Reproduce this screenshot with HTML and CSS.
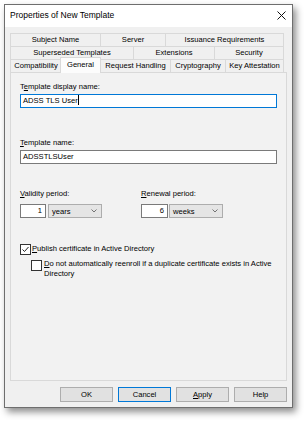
FILE: index.html
```html
<!DOCTYPE html>
<html>
<head>
<meta charset="utf-8">
<link rel="stylesheet" href="styles.css">
</head>
<body>
<div class="window">
  <div class="titlebar">
    <span class="title">Properties of New Template</span>
    <svg class="close" width="9" height="9" viewBox="0 0 9 9"><path d="M0.5 0.5 L8.5 8.5 M8.5 0.5 L0.5 8.5" stroke="#111" stroke-width="1" fill="none"/></svg>
  </div>
  <div class="content">
    <div class="tabs">
      <div class="tabrow r1">
        <div class="tab">Subject Name</div>
        <div class="tab">Server</div>
        <div class="tab">Issuance Requirements</div>
      </div>
      <div class="tabrow r2">
        <div class="tab">Superseded Templates</div>
        <div class="tab">Extensions</div>
        <div class="tab">Security</div>
      </div>
      <div class="tabrow r3">
        <div class="tab">Compatibility</div>
        <div class="tab selected">General</div>
        <div class="tab">Request Handling</div>
        <div class="tab">Cryptography</div>
        <div class="tab">Key Attestation</div>
      </div>
    </div>
    <div class="panel">
      <div class="label">T<u>e</u>mplate display name:</div>
      <div class="field focus">ADSS TLS User<span class="caret"></span></div>
      <div class="label l2"><u>T</u>emplate name:</div>
      <div class="field">ADSSTLSUser</div>
      <div class="periods">
        <div class="period">
          <div class="label"><u>V</u>alidity period:</div>
          <div class="ctrls">
            <div class="num">1</div>
            <div class="select"><span>years</span><svg width="6" height="4" viewBox="0 0 6 4"><path d="M0.5 0.5 L3 3 L5.5 0.5" stroke="#555" stroke-width="0.8" fill="none"/></svg></div>
          </div>
        </div>
        <div class="period">
          <div class="label"><u>R</u>enewal period:</div>
          <div class="ctrls">
            <div class="num num2">6</div>
            <div class="select"><span>weeks</span><svg width="6" height="4" viewBox="0 0 6 4"><path d="M0.5 0.5 L3 3 L5.5 0.5" stroke="#555" stroke-width="0.8" fill="none"/></svg></div>
          </div>
        </div>
      </div>
      <div class="check c1">
        <div class="box"><svg width="9" height="9" viewBox="0 0 9 9"><path d="M1.5 4.5 L3.5 6.5 L7.5 2" stroke="#222" stroke-width="1" fill="none"/></svg></div>
        <span><u>P</u>ublish certificate in Active Directory</span>
      </div>
      <div class="check c2">
        <div class="box"></div>
        <span><u>D</u>o not automatically reenroll if a duplicate certificate exists in Active<br>Directory</span>
      </div>
    </div>
    <div class="buttons">
      <div class="btn">OK</div>
      <div class="btn default">Cancel</div>
      <div class="btn"><u>A</u>pply</div>
      <div class="btn">Help</div>
    </div>
  </div>
</div>
</body>
</html>
```
FILE: styles.css
```css
html, body {
  margin: 0;
  padding: 0;
  background: #ffffff;
}
body {
  width: 305px;
  height: 421px;
  overflow: hidden;
  font-family: "Liberation Sans", Arial, sans-serif;
  font-size: 7.6px;
  color: #000;
}
.window {
  margin: 4px 0 0 4px;
  width: 289px;
  height: 404px;
  box-sizing: border-box;
  border: 1px solid #6e6e6e;
  background: #f0f0f0;
  box-shadow: 3px 4px 7px rgba(0, 0, 0, 0.45);
  display: flex;
  flex-direction: column;
}
.titlebar {
  height: 22px;
  background: #ffffff;
  display: flex;
  align-items: center;
  justify-content: space-between;
  padding: 0 6px 2px 5px;
  box-sizing: border-box;
}
.title {
  font-size: 8.5px;
}
.content {
  flex: 1;
  padding: 6px 5px 5px 5px;
  display: flex;
  flex-direction: column;
}
.tabs {
  width: 274px;
  display: flex;
  flex-direction: column;
}
.tabrow {
  display: grid;
  height: 13px;
}
.r1 { grid-template-columns: 90px 65px 119px; }
.r2 { grid-template-columns: 123px 81px 70px; }
.r3 { grid-template-columns: 51px 39px 70px 55px 59px; }
.tab {
  box-sizing: border-box;
  border-left: 1px solid #d9d9d9;
  border-top: 1px solid #d9d9d9;
  background: #f0f0f0;
  display: flex;
  align-items: center;
  justify-content: center;
  white-space: nowrap;
  line-height: 10px;
}
.tab:last-child {
  border-right: 1px solid #d9d9d9;
}
.tab.selected {
  position: relative;
  z-index: 1;
  margin: -2px -1px -1px -1px;
  border: 1px solid #d9d9d9;
  border-bottom: none;
  background: #fcfcfc;
  padding-bottom: 2px;
}
.panel {
  height: 309px;
  box-sizing: border-box;
  border: 1px solid #d9d9d9;
  background: #f2f2f2;
  padding: 9px 9px 0 9px;
}
.label {
  line-height: 10px;
  height: 10px;
  white-space: nowrap;
}
.field {
  margin-top: 2px;
  height: 14px;
  box-sizing: border-box;
  border: 1px solid #7a7a7a;
  background: #ffffff;
  padding-left: 2px;
  line-height: 12px;
  white-space: nowrap;
}
.field.focus {
  border-color: #0078d7;
}
.caret {
  display: inline-block;
  width: 1px;
  height: 10px;
  background: #000;
  vertical-align: middle;
  margin-top: -2px;
}
.l2 {
  margin-top: 30px;
}
.periods {
  margin-top: 25px;
  display: grid;
  grid-template-columns: 121px auto;
}
.ctrls {
  margin-top: 5px;
  display: flex;
  gap: 2px;
}
.num {
  width: 26px;
  height: 14px;
  box-sizing: border-box;
  border: 1px solid #7a7a7a;
  background: #fff;
  text-align: right;
  padding-right: 3px;
  line-height: 12px;
}
.num2 {
  width: 27px;
  margin-right: -1px;
}
.select {
  width: 54px;
  height: 14px;
  box-sizing: border-box;
  border: 1px solid #adadad;
  background: #e5e5e5;
  display: flex;
  align-items: center;
  justify-content: space-between;
  padding: 0 4px 0 3px;
}
.check {
  display: flex;
  align-items: flex-start;
  gap: 1px;
  line-height: 10px;
  white-space: nowrap;
}
.c1 {
  margin-top: 26px;
}
.c2 {
  margin-top: 5px;
  margin-left: 11px;
  gap: 2px;
}
.box {
  width: 11px;
  height: 11px;
  box-sizing: border-box;
  border: 1px solid #333;
  background: #fff;
  display: flex;
  align-items: center;
  justify-content: center;
  flex: none;
}
.c2 span {
  margin-top: -1px;
}
.buttons {
  margin-top: 6px;
  display: flex;
  justify-content: flex-end;
  gap: 5px;
}
.btn {
  width: 53px;
  height: 15px;
  box-sizing: border-box;
  border: 1px solid #adadad;
  background: #e1e1e1;
  display: flex;
  align-items: center;
  justify-content: center;
}
.btn.default {
  border-color: #0078d7;
}
```
